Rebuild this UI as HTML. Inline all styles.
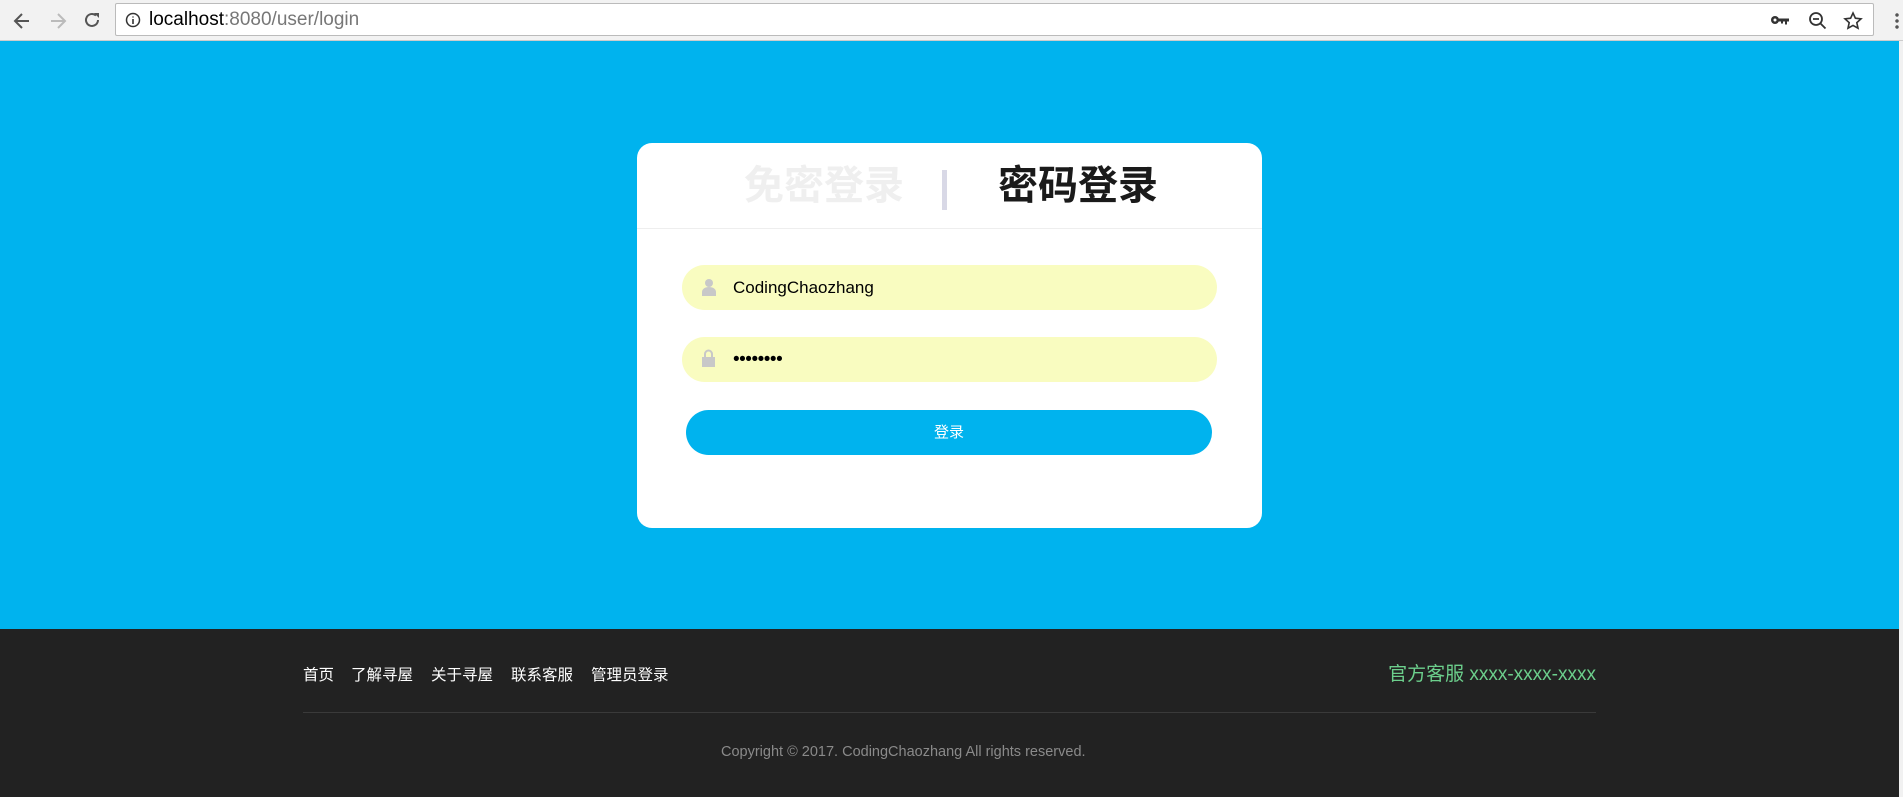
<!DOCTYPE html>
<html><head><meta charset="utf-8"><style>
*{margin:0;padding:0;box-sizing:border-box}
body{width:1903px;height:797px;overflow:hidden;font-family:"Liberation Sans","Noto Sans CJK SC",sans-serif;background:#00b3ee;position:relative}
.bar{position:absolute;left:0;top:0;width:1903px;height:41px;background:#f2f2f2;border-bottom:1px solid #ccc}
.url{position:absolute;left:115px;top:3px;width:1759px;height:33px;background:#fff;border:1px solid #bbb;border-radius:2px;font-size:19px;line-height:31px;padding-left:33px;color:#000}
.url span{color:#777}
.scroll{position:absolute;right:0;top:41px;width:4px;height:756px;background:#f1f1f1}
.card{position:absolute;left:637px;top:143px;width:625px;height:385px;background:#fff;border-radius:15px}
.head{position:absolute;left:0;top:0;width:625px;height:86px;border-bottom:1px solid #eee}
.t{position:absolute;top:20px;font-size:40px;font-weight:bold;line-height:46px;white-space:nowrap}
.sep{position:absolute;left:305px;top:27px;width:5px;height:40px;background:#d8d8e6}
.inp{position:absolute;left:45px;width:535px;height:45px;border-radius:23px;background:#f9fcc0;font-size:17px;line-height:45px;padding-left:51px;color:#000}
.btn{position:absolute;left:49px;top:267px;width:526px;height:45px;border-radius:23px;background:#00b3ee;color:#fff;text-align:center;line-height:45px;font-size:15px}
.foot{position:absolute;left:0;top:629px;width:1899px;height:168px;background:#222}
.l{position:absolute;top:34px;color:#fff;font-size:15.5px;white-space:nowrap}
.tel{position:absolute;top:30px;color:#6ccf8c;font-size:19px;white-space:nowrap}
.line{position:absolute;left:303px;top:83px;width:1293px;height:1px;background:#3a3a3a}
.copy{position:absolute;left:721px;top:115px;color:#8a8a8a;font-size:14.5px;white-space:nowrap}
</style></head><body>
<div class="bar">
<svg style="position:absolute;left:12px;top:11px" width="20" height="20" viewBox="0 0 20 20"><path d="M17 10H4M10 3L3 10l7 7" stroke="#555" stroke-width="2" fill="none"/></svg>
<svg style="position:absolute;left:48px;top:11px" width="20" height="20" viewBox="0 0 20 20"><path d="M3 10h13M10 3l7 7-7 7" stroke="#bbb" stroke-width="2" fill="none"/></svg>
<svg style="position:absolute;left:82px;top:10px" width="20" height="20" viewBox="0 0 20 20"><path d="M16 10a6 6 0 1 1-2-4.5" stroke="#555" stroke-width="2" fill="none"/><path d="M12 3h5v5z" fill="#555"/></svg>
<div class="url"><svg style="position:absolute;left:9px;top:8px" width="16" height="16" viewBox="0 0 16 16"><circle cx="8" cy="8" r="6.5" stroke="#333" stroke-width="1.5" fill="none"/><path d="M8 7v5M8 4.5v1" stroke="#333" stroke-width="1.6"/></svg>localhost<span>:8080/user/login</span>
<svg style="position:absolute;right:83px;top:9px" width="20" height="14" viewBox="0 0 20 14"><circle cx="5" cy="7" r="4" fill="#333"/><circle cx="5" cy="7" r="1.5" fill="#fff"/><path d="M8 5.5h11v3h-2v3h-2v-3h-2v2h-2v-2H8z" fill="#333"/></svg>
<svg style="position:absolute;right:45px;top:7px" width="20" height="20" viewBox="0 0 20 20"><circle cx="8" cy="8" r="6" stroke="#333" stroke-width="1.8" fill="none"/><path d="M5 8h6M12.5 12.5l5 5" stroke="#333" stroke-width="1.8"/></svg>
<svg style="position:absolute;right:10px;top:7px" width="20" height="20" viewBox="0 0 20 20"><path d="M10 2l2.4 5.2 5.6.6-4.2 3.8 1.2 5.6L10 14.4 5 17.2l1.2-5.6L2 7.8l5.6-.6z" stroke="#333" stroke-width="1.6" fill="none"/></svg>
</div>
<div style="position:absolute;right:4px;top:12px;width:4px;height:18px;background:radial-gradient(circle,#555 1.5px,transparent 2px) 0 0/4px 6px"></div>
</div>
<div class="scroll"></div>
<div class="card">
<div class="head">
<div class="t" style="left:107px;color:#efefef">免密登录</div>
<div class="sep"></div>
<div class="t" style="left:361px;color:#1a1a1a">密码登录</div>
</div>
<div class="inp" style="top:122px">
<svg style="position:absolute;left:20px;top:13px" width="14" height="18" viewBox="0 0 14 18"><circle cx="7" cy="5" r="4" fill="#c8c8c8"/><path d="M0 18v-4c0-3 3-5 7-5s7 2 7 5v4z" fill="#c8c8c8"/></svg>
CodingChaozhang</div>
<div class="inp" style="top:194px">
<svg style="position:absolute;left:20px;top:12px" width="13" height="18" viewBox="0 0 13 18"><path d="M3 8V5a3.5 3.5 0 0 1 7 0v3" stroke="#c8c8c8" stroke-width="2" fill="none"/><rect x="0" y="8" width="13" height="10" fill="#c8c8c8"/></svg>
<span style="font-size:19px;letter-spacing:-0.5px">••••••••</span></div>
<div class="btn">登录</div>
</div>
<div class="foot">
<div class="l" style="left:303px">首页</div>
<div class="l" style="left:351px">了解寻屋</div>
<div class="l" style="left:431px">关于寻屋</div>
<div class="l" style="left:511px">联系客服</div>
<div class="l" style="left:591px">管理员登录</div>
<div class="tel" style="right:303px">官方客服 xxxx-xxxx-xxxx</div>
<div class="line"></div>
<div class="copy">Copyright © 2017. CodingChaozhang All rights reserved.</div>
</div>
</body></html>
